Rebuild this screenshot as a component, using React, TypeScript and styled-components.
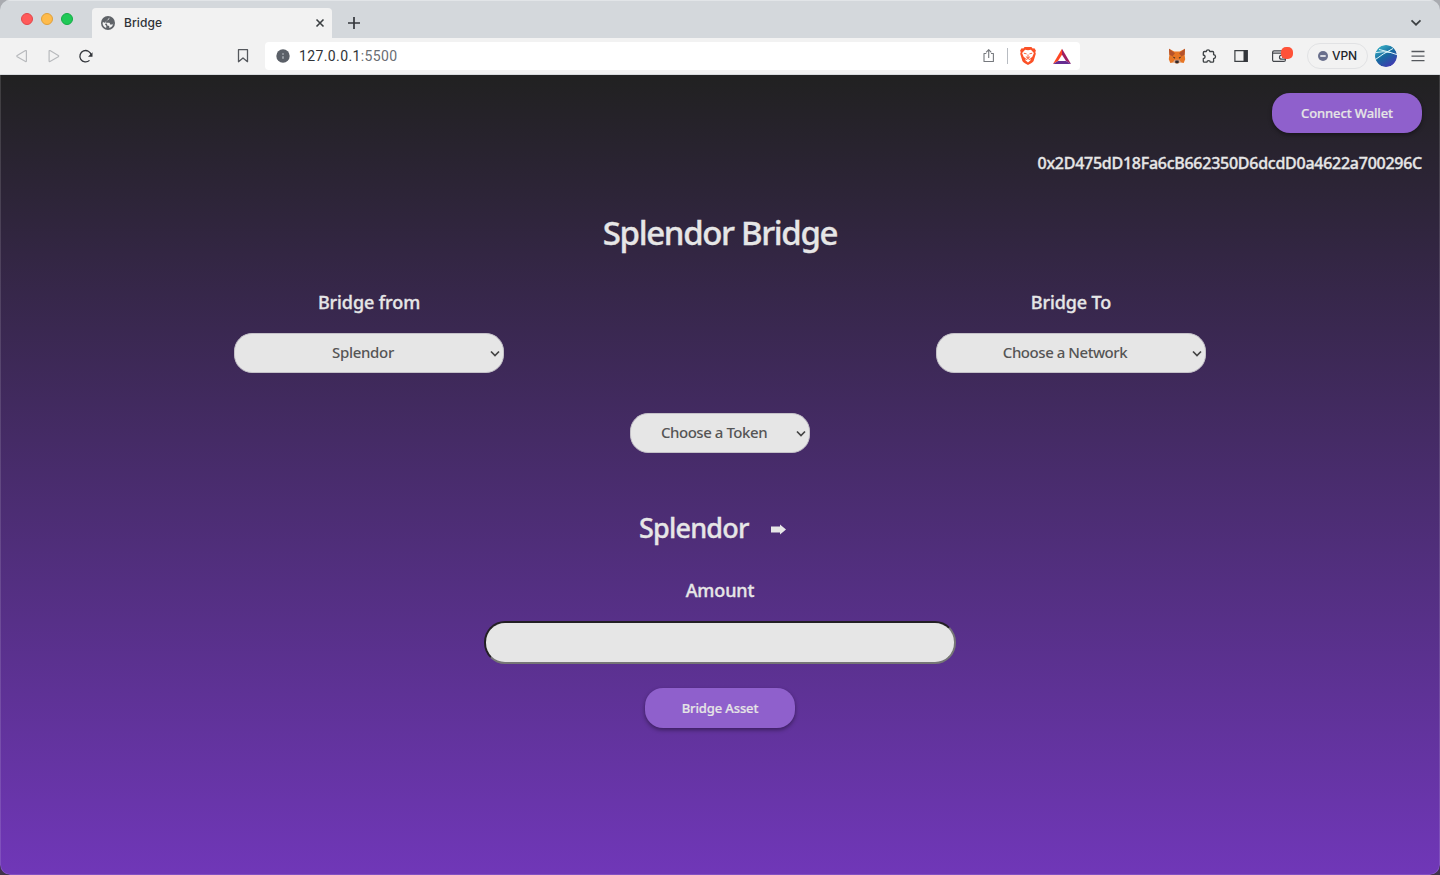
import React from "react";
import styled, { createGlobalStyle } from "styled-components";

const GlobalStyle = createGlobalStyle`
  * { box-sizing: border-box; }
  body { margin: 0; background: linear-gradient(#a9abb0 50%, #40324a 50%); font-family: Inter, "Liberation Sans", sans-serif; }
`;

const Window = styled.div`
  width: 1440px;
  height: 875px;
  border-radius: 10px;
  overflow: hidden;
  display: flex;
  flex-direction: column;
`;

const TabStrip = styled.div`
  height: 38px;
  flex: none;
  background: #d4d8dc;
  box-shadow: inset 0 1px 0 #e2e5e8;
  display: flex;
  align-items: flex-end;
`;

const Lights = styled.div`
  display: flex;
  gap: 8px;
  width: 92px;
  padding: 0 0 13px 21px;
`;

const Light = styled.span<{ $fill: string; $edge: string }>`
  width: 12px;
  height: 12px;
  border-radius: 50%;
  background: ${(p) => p.$fill};
  border: 1px solid ${(p) => p.$edge};
`;

const Tab = styled.div`
  width: 240px;
  height: 30px;
  border-radius: 4px 4px 0 0;
  background: #f2f2f2;
  display: flex;
  align-items: center;
  padding: 0 7px 0 9px;
`;

const TabTitle = styled.span`
  flex: 1;
  margin: -2px 0 0 9px;
  font-size: 12px;
  font-weight: 500;
  letter-spacing: 0.1px;
  color: #2f3237;
`;

const NewTab = styled.div`
  flex: 1;
  height: 30px;
  display: flex;
  align-items: center;
  padding-left: 16px;
`;

const TabMenu = styled.div`
  height: 30px;
  width: 30px;
  display: flex;
  align-items: center;
`;

const Toolbar = styled.div`
  height: 37px;
  flex: none;
  background: #f2f2f2;
  border-bottom: 1px solid #d8dbde;
  display: flex;
  align-items: center;
  padding: 0 15px 0 14px;
`;

const NavButtons = styled.div`
  width: 222px;
  display: flex;
  align-items: center;
  gap: 16px;
`;

const AddressBar = styled.div`
  width: 815px;
  height: 28px;
  margin-left: 15px;
  border-radius: 4px;
  background: #fff;
  display: flex;
  align-items: center;
  padding: 0 8px 0 11px;
`;

const Url = styled.span`
  flex: 1;
  margin-left: 9px;
  font-family: Roboto, "Liberation Sans", sans-serif;
  font-size: 14px;
  letter-spacing: 0.38px;
  color: #303338;
`;

const Port = styled.span`
  color: #6a6e73;
`;

const Divider = styled.span`
  width: 1px;
  height: 16px;
  margin: 0 11px 0 12px;
  background: #b8bcc2;
`;

const Extensions = styled.div`
  flex: 1;
  display: flex;
  align-items: center;
  justify-content: flex-end;
`;

const Slot = styled.span<{ $gap: number }>`
  display: flex;
  margin-left: ${(p) => p.$gap}px;
`;

const Vpn = styled.div`
  width: 61px;
  height: 26px;
  margin-left: 13px;
  border: 1px solid #e1e2e4;
  border-radius: 13px;
  display: flex;
  align-items: center;
  padding: 0 0 1px 10px;
  gap: 4px;
  font-size: 12px;
  font-weight: 500;
  letter-spacing: -0.1px;
  color: #202329;
`;

const Page = styled.main`
  flex: 1;
  background: linear-gradient(#212121, #7037b8);
  border: solid rgba(255, 255, 255, 0.13);
  border-width: 0 1px 1px;
  border-radius: 0 0 10px 10px;
  background-origin: border-box;
  display: flex;
  flex-direction: column;
  align-items: center;
  font-family: "Noto Sans", "Open Sans", sans-serif;
  font-weight: 500;
  color: #e6e6e6;
`;

const Account = styled.div`
  width: 100%;
  padding: 18px 17px 0;
  display: flex;
  flex-direction: column;
  align-items: flex-end;
`;

const Button = styled.button`
  width: 150px;
  height: 40px;
  border: 0;
  border-radius: 18px;
  background: #8f60cc;
  box-shadow: 0 2px 4px rgba(0, 0, 0, 0.4);
  padding: 0 0 1px;
  font: 500 13px "Noto Sans", sans-serif;
  letter-spacing: -0.12px;
  color: #e6e6e6;
  -webkit-text-stroke: 0.2px;
`;

const Address = styled.div`
  height: 24px;
  line-height: 24px;
  margin-top: 18px;
  font-size: 16px;
  letter-spacing: -0.26px;
  white-space: nowrap;
  -webkit-text-stroke: 0.35px;
`;

const Heading = styled.div<{ $size: number; $height: number; $spacing: number }>`
  height: ${(p) => p.$height}px;
  line-height: ${(p) => p.$height}px;
  font-size: ${(p) => p.$size}px;
  letter-spacing: ${(p) => p.$spacing}px;
  white-space: nowrap;
  -webkit-text-stroke: 0.35px;
`;

const Title = styled(Heading)`
  margin-top: 34px;
`;

const Networks = styled.div`
  width: 972px;
  margin-top: 33px;
  display: flex;
  justify-content: space-between;
`;

const Field = styled.div`
  width: 270px;
  display: flex;
  flex-direction: column;
  align-items: center;
  gap: 19px;
`;

const SelectBox = styled.div<{ $width: number; $spacing: number }>`
  width: ${(p) => p.$width}px;
  height: 40px;
  border: 1px solid #c4c1c8;
  border-radius: 18px;
  background: #e6e6e6;
  color: #555;
  display: flex;
  align-items: center;
  padding: 0 2px 1px 2px;
  font-size: 15px;
  letter-spacing: ${(p) => p.$spacing}px;
`;

const SelectValue = styled.span`
  flex: 1;
  margin-top: -2px;
  text-align: center;
  white-space: nowrap;
`;

const TokenRow = styled.div`
  margin-top: 40px;
`;

const Route = styled.div`
  width: 162px;
  margin-top: 54px;
  display: flex;
  align-items: center;
  gap: 22px;
`;

const AmountLabel = styled(Heading)`
  margin-top: 29px;
`;

const AmountInput = styled.input`
  width: 472px;
  height: 43px;
  margin: 19px 0 24px;
  padding: 0 20px;
  border: 2px solid #767676;
  border-color: #231f24 #767676 #767676 #231f24;
  border-radius: 21px;
  background: #e6e6e6;
  outline: 0;
`;

const Chevron = () => (
  <svg width="12" height="12" viewBox="0 0 12 12" fill="none" stroke="#444" strokeWidth="1.7">
    <path d="M2 4.500l4 4 4-4" />
  </svg>
);

function Select({ label, width, spacing }: { label: string; width: number; spacing: number }) {
  return (
    <SelectBox $width={width} $spacing={spacing}>
      <SelectValue>{label}</SelectValue>
      <Chevron />
    </SelectBox>
  );
}

function Browser() {
  return (
    <>
      <TabStrip>
        <Lights>
          <Light $fill="#ff5a5a" $edge="#e2464b" />
          <Light $fill="#febb4b" $edge="#dfa03a" />
          <Light $fill="#20c957" $edge="#15ab46" />
        </Lights>
        <Tab>
          <svg width="14" height="14" viewBox="0 0 14 14">
            <circle cx="7" cy="7" r="7" fill="#5f6368" />
            <path d="M8.300 1.600v.8c0 .8-.7 1.300-1.400 1.300h-1v1.400c0 .4-.4.700-.8.700h-.900v1h3.900c.5 0 .8.400.8.800v1h2.300c.4 0 .7-.2.800-.6l.4-1.200c-.1 2.600-1.800 4.700-4.100 5.300v-1.300c0-.6-.5-1-1-1-.7 0-1.200-.6-1.200-1.300v-.7L1.900 5.900l-.3 1.600c.2 2 1.600 3.800 3.500 4.500l.3-2.100-1.600-1.900z" fill="#f2f2f2" />
          </svg>
          <TabTitle>Bridge</TabTitle>
          <svg width="10" height="10" viewBox="0 0 10 10" stroke="#3c4043" strokeWidth="1.6"><path d="M1.500 1.500l7 7M8.500 1.500l-7 7" /></svg>
        </Tab>
        <NewTab>
          <svg width="12" height="12" viewBox="0 0 12 12" stroke="#33363b" strokeWidth="1.7"><path d="M6 0v12M0 6h12" /></svg>
        </NewTab>
        <TabMenu>
          <svg width="12" height="12" viewBox="0 0 12 12" fill="none" stroke="#3c4043" strokeWidth="1.700"><path d="M1.500 3.300L6 7.700l4.500-4.400" /></svg>
        </TabMenu>
      </TabStrip>
      <Toolbar>
        <NavButtons>
          <svg width="16" height="16" viewBox="0 0 16 16" fill="none" stroke="#b8babd" strokeWidth="1.200" strokeLinejoin="round"><path d="M12.400 3.200v9.700q0 1-.9.500L3.200 8.800q-.8-.7 0-1.400L11.500 2.600q.9-.4.9.600z" /></svg>
          <svg width="16" height="16" viewBox="0 0 16 16" fill="none" stroke="#b8babd" strokeWidth="1.200" strokeLinejoin="round"><path d="M3.100 3.200v9.700q0 1 .9.500L12.300 8.800q.8-.7 0-1.400L4 2.600q-.9-.4-.9.600z" /></svg>
          <svg width="16" height="16" viewBox="0 0 16 16" fill="none" stroke="#33363b" strokeWidth="1.300"><path d="M11.500 12.400a5.700 5.700 0 1 1 1.700-5.200" /><path d="M14.500 4.200v4.500H10z" fill="#33363b" stroke="none" /></svg>
        </NavButtons>
        <svg width="14" height="16" viewBox="0 0 14 16" fill="none" stroke="#55585d" strokeWidth="1.300" strokeLinejoin="round"><path d="M2.500 1.700h9v12L7 9.900l-4.500 3.800z" /></svg>
        <AddressBar>
          <svg width="14" height="14" viewBox="0 0 14 14"><circle cx="7" cy="7" r="6.700" fill="#5b6068" /><path d="M7 4.200v1.600M7 7.300v2.400" stroke="#b9bdc3" strokeWidth="1.300" /></svg>
          <Url>127.0.0.1<Port>:5500</Port></Url>
          <Slot $gap={0}>
            <svg width="14" height="16" viewBox="0 0 14 16" fill="none" stroke="#76797e" strokeWidth="1.100"><path d="M5.300 5.500H3v8h9.400v-8H10M7.700 10V1.800M5.100 4.300l2.600-2.600 2.600 2.600" strokeLinejoin="round" /></svg>
          </Slot>
          <Divider />
          <svg width="18" height="20" viewBox="0 0 18 20">
            <path d="M5.600 1h6.800l1.300 1.500 1.700-.2 1.500 2.200-.6 1.700.5 1.600-2.200 7.300Q14 16.500 9 19q-5-2.500-5.600-3.900L1.200 7.800l.5-1.600L1.100 4.500l1.500-2.200 1.700.2z" fill="#fb5127" />
            <path d="M6.100 3.700L9 4.200l2.900-.5 3 3.200-1.700 4.200-2 1.200.4 2L9 16.400l-2.600-2.100.4-2-2-1.200-1.700-4.200z" fill="#fff" />
            <path d="M4.800 7.200l2.800.7M13.200 7.200l-2.800.7M9 8.500v3M6.900 10.700L9 12l2.100-1.300M7 13.600l2-1.100 2 1.100" fill="none" stroke="#fb5127" strokeWidth=".9" />
          </svg>
          <Slot $gap={16}>
            <svg width="19" height="17" viewBox="0 0 19 17"><path d="M9 .8L0 16l5-3 4-6.300z" fill="#ff4724" /><path d="M9 .8l9 15.200-5-3-4-6.300z" fill="#9e1f63" /><path d="M0 16h18l-5-3H5z" fill="#662d91" /></svg>
          </Slot>
        </AddressBar>
        <Extensions>
          <svg width="18" height="16" viewBox="0 0 18 16">
            <path d="M1 .8l5.300 2.700h5.400L17 .8l-.4 6 .6 4.500-1.500 3.700-4-.8-1.500 1.300H7.800l-1.500-1.300-4 .8-1.500-3.700.6-4.500z" fill="#e77625" />
            <path d="M1 .8l6 4.400-2.500 3L1.400 6.800zM17 .8l-6 4.400 2.500 3 3.100-1.400z" fill="#b5522a" />
            <path d="M4.500 8.500l2.800 1-.8 1.300zM13.500 8.500l-2.800 1 .8 1.300z" fill="#40312b" />
            <path d="M5 14l1.700-2.200h4.600L13 14l-2 .7H7z" fill="#d7a48b" />
            <path d="M7.500 12.600h3l.4 1.600-.8 1H7.900l-.8-1z" fill="#30292a" />
          </svg>
          <Slot $gap={15}>
            <svg width="16" height="16" viewBox="0 0 16 16" fill="none" stroke="#3c4043" strokeWidth="1.300" strokeLinejoin="round"><path d="M3.500 3.500h1.800c.2-2.300 3.300-2.300 3.500 0h2.900q.9 0 .9.900v2.300c2.600.4 2.600 3.500 0 3.900v2.600q0 .9-.9.900H9.300c-.2-2.100-3.200-2.100-3.400 0H3.200q-.9 0-.9-.9v-2.600c2.400-.3 2.400-3.200 0-3.600V4.700q0-1.200 1.200-1.200z" /></svg>
          </Slot>
          <Slot $gap={17}>
            <svg width="14" height="14" viewBox="0 0 14 14"><path d="M.9 1.600h12.300v10.800H.9z" fill="none" stroke="#3c4043" strokeWidth="1.200" /><path d="M9.500 1h4.200v12H9.500z" fill="#33363b" /></svg>
          </Slot>
          <Slot $gap={23}>
            <svg width="23" height="18" viewBox="0 0 23 18" fill="none" stroke="#44474c" strokeWidth="1.200"><rect x="1.600" y="3.800" width="12.800" height="10.600" rx="1.500" /><path d="M2 6.100h12M14.500 8.200h-4a2 2 0 0 0 0 4h4M11 10.200h1.500" /><rect x="10" y="0" width="12" height="12" rx="5" fill="#ff5238" stroke="none" /></svg>
          </Slot>
          <Vpn>
            <svg width="10" height="10" viewBox="0 0 10 10"><circle cx="5" cy="5" r="5" fill="#696f8c" /><path d="M2.300 5h5.400" stroke="#fff" strokeWidth="1.300" /></svg>
            VPN
          </Vpn>
          <Slot $gap={7}>
            <svg width="22" height="22" viewBox="0 0 22 22"><defs><linearGradient id="avatar" x1="0" y1="0" x2=".65" y2="1"><stop stopColor="#42c3cf" /><stop offset=".55" stopColor="#176aa0" /><stop offset="1" stopColor="#403bb1" /></linearGradient><clipPath id="disc"><circle cx="11" cy="11" r="11" /></clipPath></defs><g clipPath="url(#disc)"><circle cx="11" cy="11" r="11" fill="url(#avatar)" /><path d="M-1 15.500Q8 8.500 18 3.500M4 4.500Q14 6.500 23 10M1 7.500Q8 6 16 7.500" fill="none" stroke="#e1f7fa" strokeWidth="1" /></g></svg>
          </Slot>
          <Slot $gap={14}>
            <svg width="14" height="14" viewBox="0 0 14 14" stroke="#55585d" strokeWidth="1.300"><path d="M.5 2.500h13M.5 7.100h13M.5 11.700h13" /></svg>
          </Slot>
        </Extensions>
      </Toolbar>
    </>
  );
}

export default function App() {
  return (
    <>
      <GlobalStyle />
      <Window>
        <Browser />
        <Page>
          <Account>
            <Button>Connect Wallet</Button>
            <Address>0x2D475dD18Fa6cB662350D6dcdD0a4622a700296C</Address>
          </Account>
          <Title $size={33} $height={48} $spacing={-1.35}>Splendor Bridge</Title>
          <Networks>
            <Field>
              <Heading $size={18} $height={24} $spacing={-0.1}>Bridge from</Heading>
              <Select label="Splendor" width={270} spacing={-0.3} />
            </Field>
            <Field>
              <Heading $size={18} $height={24} $spacing={-0.1}>Bridge To</Heading>
              <Select label="Choose a Network" width={270} spacing={-0.45} />
            </Field>
          </Networks>
          <TokenRow>
            <Select label="Choose a Token" width={180} spacing={-0.45} />
          </TokenRow>
          <Route>
            <Heading $size={27} $height={42} $spacing={-0.8}>Splendor</Heading>
            <svg width="15" height="15" viewBox="0 0 15 15"><path d="M0 5.500h9V3.500l6 5-6 5v-2H0z" fill="#e6e6e6" /></svg>
          </Route>
          <AmountLabel $size={18} $height={24} $spacing={-0.1}>Amount</AmountLabel>
          <AmountInput />
          <Button>Bridge Asset</Button>
        </Page>
      </Window>
    </>
  );
}
